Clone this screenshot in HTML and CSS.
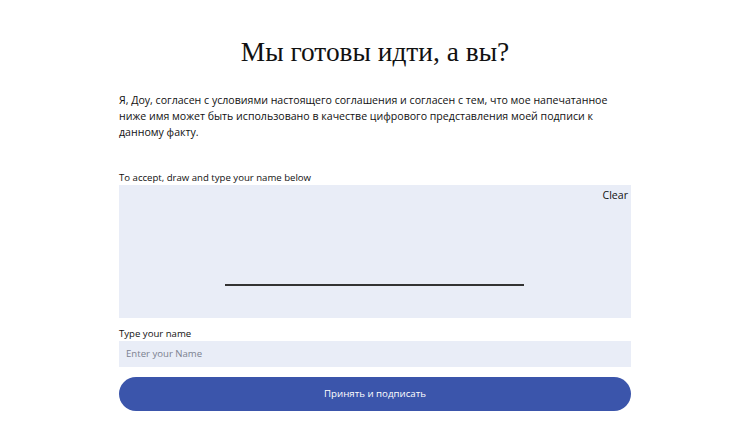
FILE: index.html
```html
<!DOCTYPE html>
<html lang="ru">
<head>
    <meta charset="UTF-8">
    <meta name="viewport" content="width=device-width, initial-scale=1.0">
    <title>Подпись</title>
    <link rel="stylesheet" href="styles.css">
</head>
<body>
    <div class="sign">
        <h1 class="title">Мы готовы идти, а вы?</h1>
        <p class="text">Я, Доу, согласен с условиями настоящего соглашения и согласен с тем, что мое напечатанное ниже имя может быть использовано в качестве цифрового представления моей подписи к данному факту.</p>

        <div class="label label-draw">To accept, draw and type your name below</div>
        <div class="pad">
            <span class="clear">Clear</span>
            <div class="pad-line"></div>
        </div>

        <div class="label label-name">Type your name</div>
        <input class="name" type="text" placeholder="Enter your Name">

        <button class="submit">Принять и подписать</button>
    </div>
</body>
</html>
```

FILE: styles.css
```css
*{
    padding: 0;
    margin: 0;
    box-sizing: border-box;
}
body{
    background: #fff;
    color: #111;
    font-family: "Open Sans", sans-serif;
}
.sign{
    width: 512px;
    margin: 0 auto;
    padding-top: 35px;
}
.title{
    font-family: "Liberation Serif", serif;
    font-weight: normal;
    font-size: 27.4px;
    line-height: 34px;
    text-align: center;
}
.text{
    margin-top: 23px;
    font-size: 10.6px;
    line-height: 16.2px;
}
.label{
    font-size: 9.6px;
    line-height: 15px;
}
.label-draw{
    margin-top: 29px;
}
/* поле для подписи */
.pad{
    position: relative;
    height: 133px;
    background-color: #e9edf7;
}
.clear{
    position: absolute;
    right: 3px;
    top: 2px;
    font-size: 10.6px;
    line-height: 16px;
}
.pad-line{
    position: absolute;
    left: 106px;
    top: 99px;
    width: 299px;
    height: 2px;
    background-color: #333;
}
.label-name{
    margin-top: 8px;
}
.name{
    display: block;
    width: 100%;
    height: 26px;
    padding: 0 7px;
    border: none;
    outline: none;
    background-color: #e9edf7;
    font-family: "Open Sans", sans-serif;
    font-size: 9.6px;
    color: #333;
}
.name::placeholder{
    color: #7b8190;
}
.submit{
    display: block;
    width: 100%;
    height: 34px;
    margin-top: 10px;
    border: none;
    border-radius: 17px;
    background-color: #3b55ab;
    color: #fff;
    font-family: "Open Sans", sans-serif;
    font-size: 9.7px;
}
```
